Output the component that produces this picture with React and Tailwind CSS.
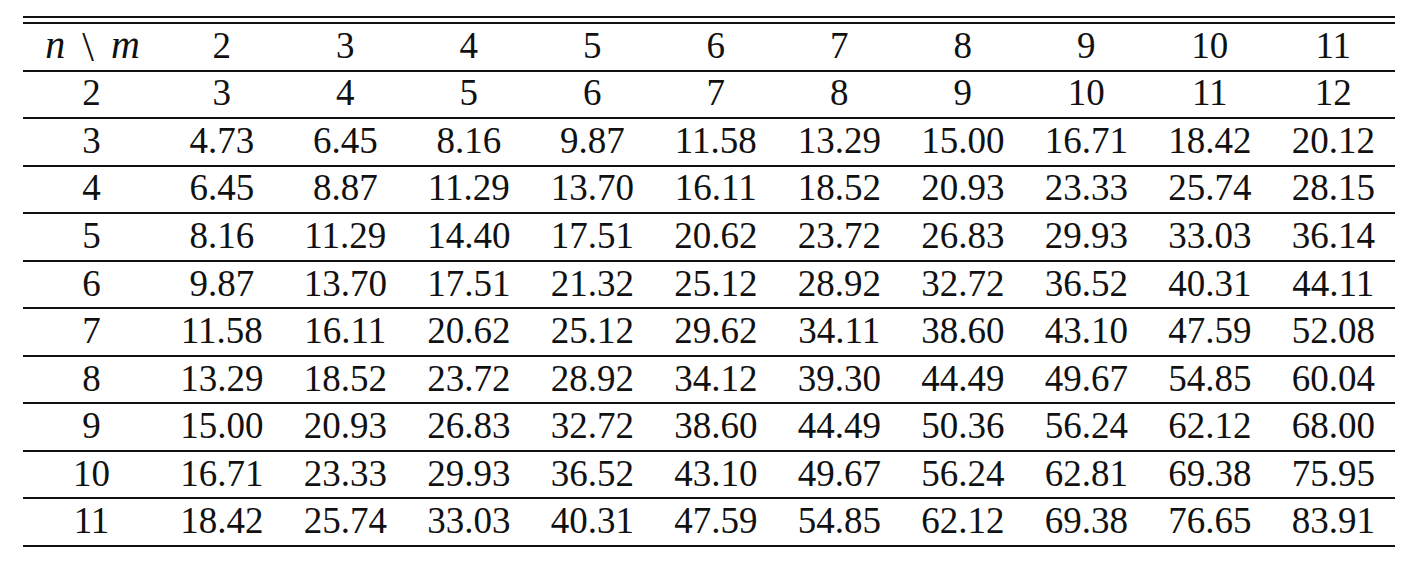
import React from 'react';

const header = [2, 3, 4, 5, 6, 7, 8, 9, 10, 11];

const rows = [
  ['2', '3', '4', '5', '6', '7', '8', '9', '10', '11', '12'],
  ['3', '4.73', '6.45', '8.16', '9.87', '11.58', '13.29', '15.00', '16.71', '18.42', '20.12'],
  ['4', '6.45', '8.87', '11.29', '13.70', '16.11', '18.52', '20.93', '23.33', '25.74', '28.15'],
  ['5', '8.16', '11.29', '14.40', '17.51', '20.62', '23.72', '26.83', '29.93', '33.03', '36.14'],
  ['6', '9.87', '13.70', '17.51', '21.32', '25.12', '28.92', '32.72', '36.52', '40.31', '44.11'],
  ['7', '11.58', '16.11', '20.62', '25.12', '29.62', '34.11', '38.60', '43.10', '47.59', '52.08'],
  ['8', '13.29', '18.52', '23.72', '28.92', '34.12', '39.30', '44.49', '49.67', '54.85', '60.04'],
  ['9', '15.00', '20.93', '26.83', '32.72', '38.60', '44.49', '50.36', '56.24', '62.12', '68.00'],
  ['10', '16.71', '23.33', '29.93', '36.52', '43.10', '49.67', '56.24', '62.81', '69.38', '75.95'],
  ['11', '18.42', '25.74', '33.03', '40.31', '47.59', '54.85', '62.12', '69.38', '76.65', '83.91'],
];

const rowClass =
  'grid grid-cols-[137px_repeat(10,1fr)] h-[47.55px] pb-[3px] border-b-2 border-[#111] items-center';

export default function App() {
  return (
    <div className="bg-white w-[1412px] h-[565px] pt-4 pl-[23px]">
      <div
        className="w-[1372px] text-[#111] text-[37px] leading-none"
        style={{ fontFamily: '"Liberation Serif", "DejaVu Serif", serif' }}
      >
        <div className="h-2 border-y-2 border-[#111]" />

        <div className={rowClass}>
          <div className="flex justify-center items-center pl-[2px]">
            <span className="italic text-[40px]">n</span>
            <span className="mx-[17px] text-[42px] translate-y-[2px]">\</span>
            <span className="italic text-[40px]">m</span>
          </div>
          {header.map((m) => (
            <div key={m} className="text-center">{m}</div>
          ))}
        </div>

        {rows.map((row) => (
          <div key={row[0]} className={rowClass}>
            {row.map((cell, i) => (
              <div key={i} className="text-center">{cell}</div>
            ))}
          </div>
        ))}
      </div>
    </div>
  );
}
